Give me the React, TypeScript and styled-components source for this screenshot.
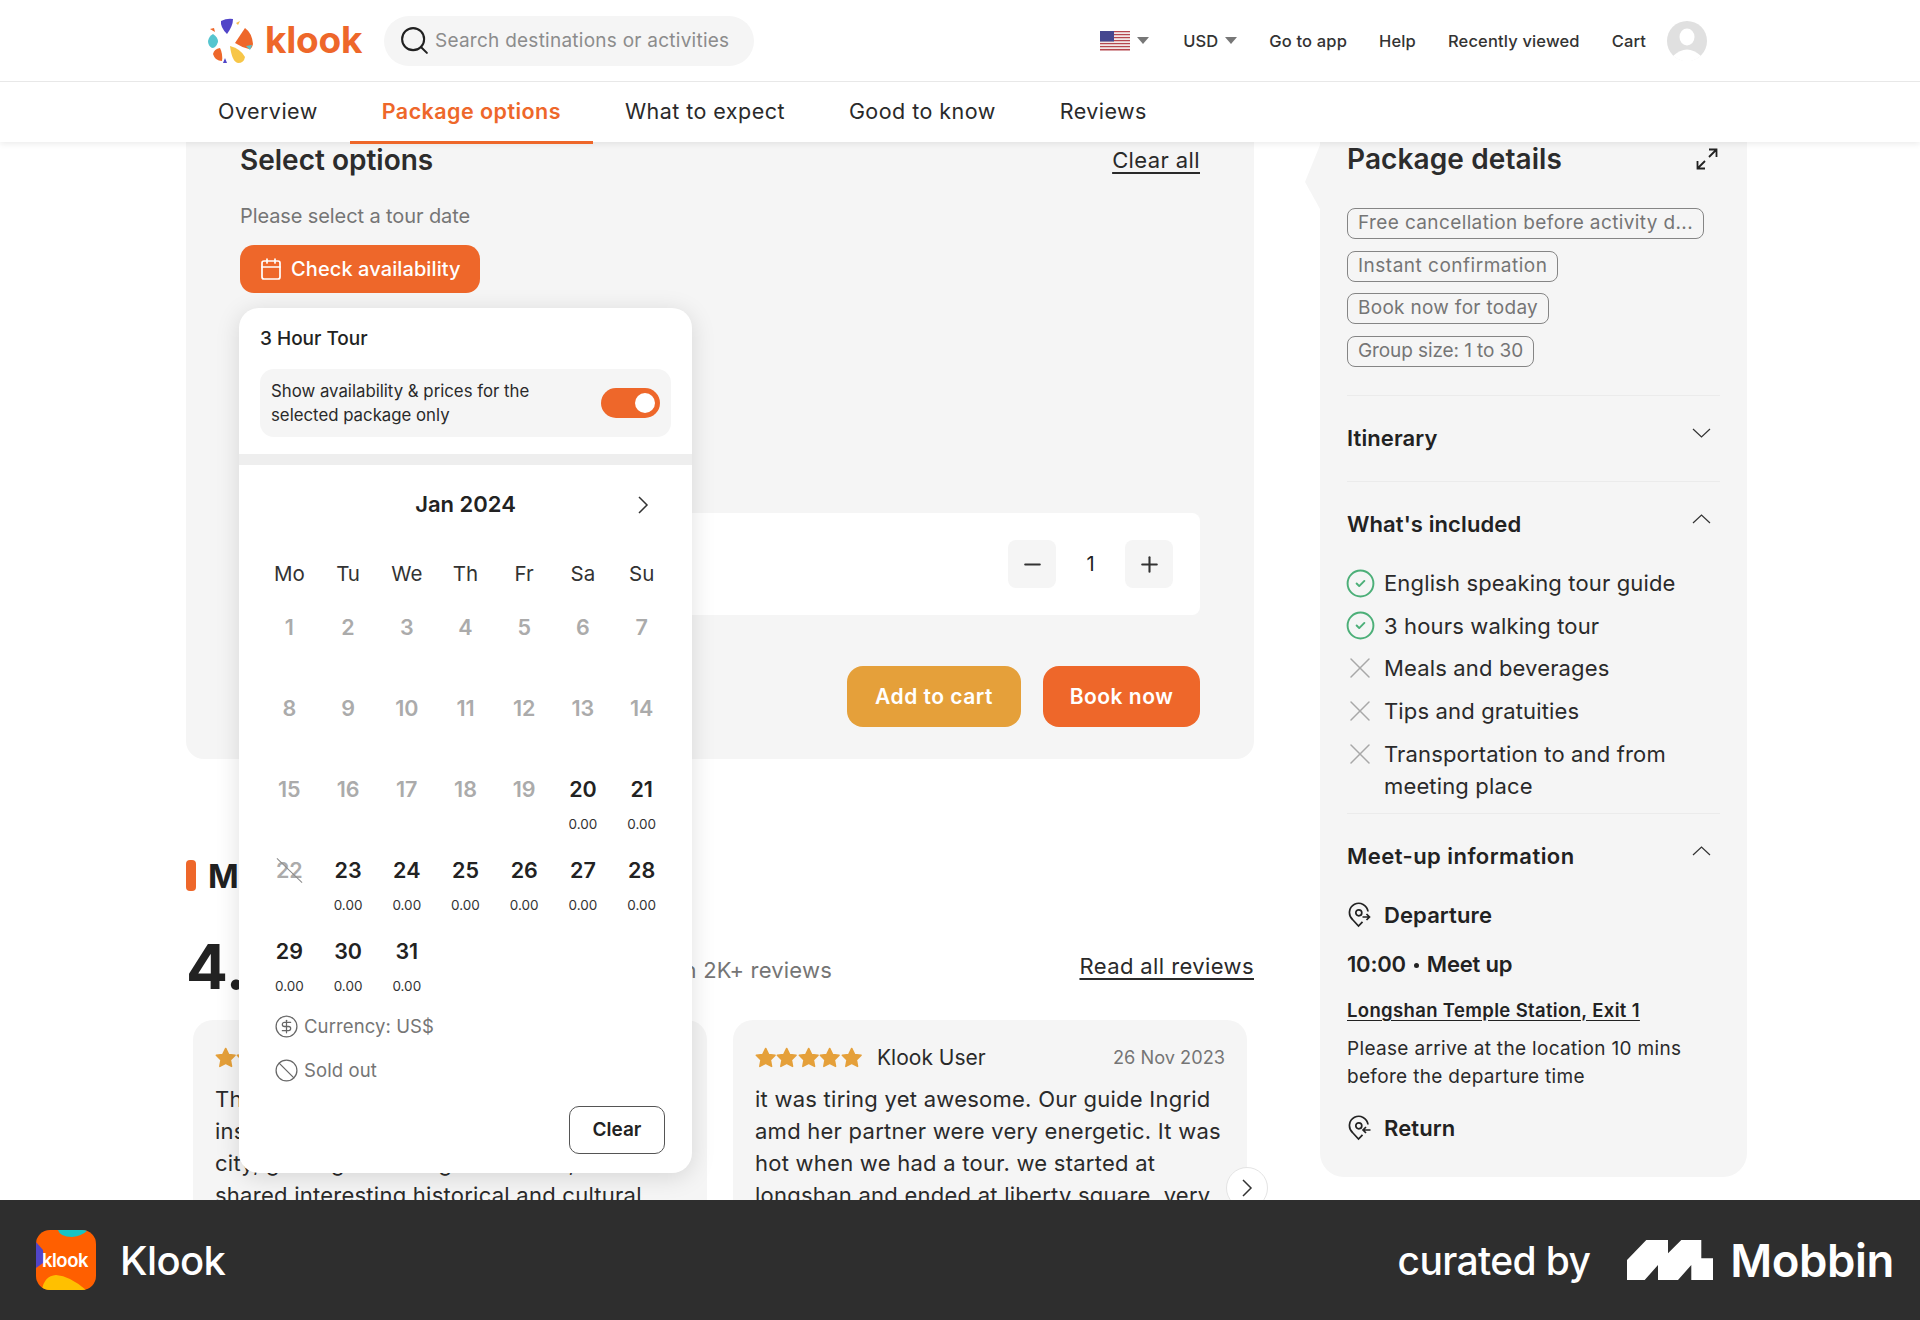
import React from 'react';
import styled, { createGlobalStyle } from 'styled-components';
import { Search, Calendar, CircleCheck, X, Minus, Plus, CircleDollarSign, Ban } from 'lucide-react';

const orange = '#ee672a';
const amber = '#e5a03a';
const ink = '#212121';
const grey = '#757575';
const panel = '#f5f5f5';

const Global = createGlobalStyle`
  html, body { margin: 0; padding: 0; background: #fff; }
  body { font-family: Inter, "Noto Sans", "Liberation Sans", sans-serif; color: ${ink}; }
  * { box-sizing: border-box; }
`;

const Page = styled.div`
  width: 1920px; height: 1320px; display: flex; flex-direction: column; overflow: hidden;
`;

/* ---------- top bar ---------- */
const TopBar = styled.header`
  height: 82px; flex: none; display: flex; align-items: center; padding-left: 205px; padding-right: 213px;
  border-bottom: 1px solid #e8e8e8; background: #fff; position: relative; z-index: 3;
`;
const Brand = styled.div`display: flex; align-items: center; gap: 8px; width: 179px; flex: none;`;
const BrandName = styled.span`
  font-size: 37px; font-weight: 700; color: ${orange}; letter-spacing: -0.2px; line-height: 44px; margin-top: -2px;
`;
const SearchBox = styled.div`
  width: 370px; height: 50px; border-radius: 25px; background: ${panel}; display: flex; align-items: center;
  gap: 4px; padding-left: 14px; color: #8c8c8c; font-size: 19px; letter-spacing: 0.25px; flex: none;
  svg { color: ${ink}; }
`;
const TopLinks = styled.nav`
  margin-left: auto; display: flex; align-items: center; font-size: 16.5px; font-weight: 500; color: #333; letter-spacing: 0.15px;
`;
const TopLink = styled.span<{ $gap?: number }>`
  margin-left: ${p => p.$gap ?? 32}px; display: flex; align-items: center; gap: 7px; white-space: nowrap;
`;
const Caret = styled.i`
  width: 0; height: 0; border-left: 6px solid transparent; border-right: 6px solid transparent; border-top: 7px solid #777; display: block;
`;
const Avatar = styled.span`display: block; width: 40px; height: 40px; margin-left: 21px;`;

/* ---------- tabs ---------- */
const Tabs = styled.nav`
  height: 60px; flex: none; display: flex; padding-left: 186px; background: #fff; position: relative; z-index: 2;
  box-shadow: 0 2px 6px rgba(0, 0, 0, 0.08);
`;
const Tab = styled.span<{ $active?: boolean }>`
  padding: 0 32px 2px; display: flex; align-items: center; font-size: 21.5px; height: 62px; white-space: nowrap; letter-spacing: 0.45px;
  font-weight: ${p => (p.$active ? 600 : 400)};
  color: ${p => (p.$active ? orange : '#2a2a2a')};
  border-bottom: 3px solid ${p => (p.$active ? orange : 'transparent')};
`;

/* ---------- main ---------- */
const Main = styled.main`
  flex: 1; min-height: 0; overflow: hidden; display: flex; align-items: flex-start; gap: 66px; padding-left: 186px;
`;
const LeftColumn = styled.div`width: 1068px; flex: none; position: relative;`;
const OptionsCard = styled.section`
  background: ${panel}; border-radius: 0 0 18px 18px; padding: 0 54px 32px;
`;
const SpacedRow = styled.div`display: flex; justify-content: space-between; align-items: center;`;
const CardTitle = styled.h2`
  margin: 0; font-size: 28px; line-height: 36px; font-weight: 600; color: #2c2c2c;
`;
const UnderLink = styled.a`font-size: 22px; color: #2a2a2a; text-decoration: underline; text-underline-offset: 4px; letter-spacing: .4px;`;
const Hint = styled.p`margin: 25px 0 0; font-size: 20px; line-height: 26px; color: ${grey}; letter-spacing: -.1px;`;
const CheckButton = styled.button`
  margin-top: 16px; width: 240px; height: 48px; border: 0; border-radius: 14px; background: ${orange}; color: #fff;
  font: 500 20px Inter, sans-serif; display: flex; align-items: center; gap: 8px; padding: 0 0 0 19px; letter-spacing: .1px;
`;
const QuantityRow = styled.div`
  margin-top: 220px; height: 102px; background: #fff; border-radius: 8px; display: flex; align-items: center; justify-content: flex-end; padding-right: 27px;
`;
const StepButton = styled.span`
  width: 48px; height: 48px; border-radius: 8px; background: ${panel}; display: flex; align-items: center; justify-content: center; color: #333;
`;
const Quantity = styled.span`width: 69px; text-align: center; font-size: 20px;`;
const Actions = styled.div`margin-top: 51px; display: flex; justify-content: flex-end; gap: 22px;`;
const ActionButton = styled.button<{ $tone: string; $w: number }>`
  width: ${p => p.$w}px; height: 61px; border: 0; border-radius: 16px; background: ${p => p.$tone}; color: #fff;
  font: 600 21px Inter, sans-serif; letter-spacing: .5px;
`;

const SectionHead = styled.div`margin-top: 101px; height: 31px; display: flex; align-items: center; gap: 12px;`;
const SectionBar = styled.i`display: block; width: 10px; height: 31px; border-radius: 4px; background: ${orange};`;
const SectionTitle = styled.h2`margin: 0; font-size: 33px; font-weight: 700; color: ${ink};`;
const RatingRow = styled.div`margin-top: 40px; height: 70px; display: flex; align-items: center; justify-content: space-between;`;
const RatingLeft = styled.div`width: 646px; display: flex; align-items: center; justify-content: space-between;`;
const Score = styled.span`font-size: 62px; font-weight: 700; color: #222;`;
const ScoreNote = styled.span`font-size: 22px; color: ${grey}; margin-top: 8px; letter-spacing: .2px;`;
const ReviewRow = styled.div`margin-top: 19px; padding: 0 7px; display: flex; gap: 26px; position: relative;`;
const ReviewCard = styled.article`
  width: 514px; height: 300px; background: ${panel}; border-radius: 20px; padding: 22px;
`;
const ReviewTop = styled.div`height: 30px; display: flex; align-items: center;`;
const Stars = styled.span`display: flex; width: 107px; margin-right: 15px;`;
const Reviewer = styled.span`font-size: 21px; color: #2a2a2a;`;
const ReviewDate = styled.span`margin-left: auto; font-size: 18.2px; color: ${grey};`;
const ReviewBody = styled.p`margin: 11px 0 0; font-size: 22px; line-height: 32px; color: #2a2a2a; white-space: nowrap; letter-spacing: .25px;`;
const RoundNext = styled.span`
  position: absolute; right: -14px; top: 147px; width: 42px; height: 42px; border-radius: 50%; background: #fff; border: 1px solid #e4e4e4;
  display: flex; align-items: center; justify-content: center;
`;

/* ---------- calendar popup ---------- */
const Popup = styled.div`
  position: absolute; left: 53px; top: 166px; width: 453px; height: 865px; background: #fff; border-radius: 20px; z-index: 1;
  box-shadow: 0 4px 24px rgba(0, 0, 0, 0.13); padding-top: 18px; display: flex; flex-direction: column;
`;
const PopupTitle = styled.div`padding: 0 21px; font-size: 19px; line-height: 26px; font-weight: 500; color: #222;`;
const ToggleBox = styled.div`
  margin: 17px 21px 0; height: 68px; border-radius: 14px; background: ${panel}; display: flex; align-items: center; justify-content: space-between; padding: 0 11px;
`;
const ToggleText = styled.span`font-size: 16.8px; line-height: 24px; color: #2a2a2a; white-space: nowrap;`;
const Switch = styled.span`
  width: 59px; height: 30px; border-radius: 15px; background: ${orange}; position: relative; display: block;
  &::after { content: ''; position: absolute; right: 5px; top: 5px; width: 20px; height: 20px; border-radius: 50%; background: #fff; }
`;
const PopupRule = styled.div`margin-top: 17px; height: 11px; background: #eeeeee; flex: none;`;
const MonthRow = styled.div`
  margin: 24px 21px 0; height: 30px; display: flex; align-items: center; justify-content: center; position: relative;
  font-size: 22px; font-weight: 600; color: #222;
`;
const MonthNext = styled.span`position: absolute; right: 22px; top: 6px; display: flex;`;
const WeekRow = styled.div`
  margin: 43px 21px 0; display: grid; grid-template-columns: repeat(7, 1fr); font-size: 20.5px; line-height: 24px; text-align: center; color: #333;
`;
const DayGrid = styled.div`
  margin: 23px 21px 0; display: grid; grid-template-columns: repeat(7, 1fr); grid-auto-rows: 81px; text-align: center;
`;
const DayCell = styled.div``;
const DayNum = styled.div<{ $on?: boolean }>`
  font-size: 21.5px; line-height: 36px; font-weight: 600; color: ${p => (p.$on ? '#222' : '#ababab')};
`;
const Struck = styled.span`
  position: relative; display: inline-block;
  &::after { content: ''; position: absolute; left: -4px; top: 18px; width: 35px; height: 1px; background: #8a8a8a; transform: rotate(44deg); }
`;
const Price = styled.div`font-size: 13.5px; line-height: 34px; color: #333;`;
const Legend = styled.div`
  margin: 0 21px 20px 35px; height: 24px; display: flex; align-items: center; gap: 5px; font-size: 18.5px; color: ${grey}; letter-spacing: .1px;
  svg { flex: none; }
`;
const ClearButton = styled.button`
  align-self: flex-end; margin: 4px 27px 0 0; width: 96px; height: 48px; background: #fff; border: 1.5px solid #555; border-radius: 10px; padding-bottom: 2px;
  font: 600 19px Inter, sans-serif; color: #222;
`;

/* ---------- package panel ---------- */
const DetailsCard = styled.aside`
  width: 427px; flex: none; background: ${panel}; border-radius: 0 0 24px 24px; padding: 0 27px 34px; position: relative;
  &::before { content: ''; position: absolute; left: -15px; top: 3px; width: 15px; height: 64px; background: ${panel};
    clip-path: polygon(100% 0, 0 58%, 100% 100%); }
`;
const DetailsHead = styled.div`height: 34px; display: flex; align-items: center; justify-content: space-between; padding-right: 2px;`;
const DetailsTitle = styled.h2`margin: 0; font-size: 28px; font-weight: 600; color: #2c2c2c; letter-spacing: .1px;`;
const TagList = styled.div`margin-top: 32px; display: flex; flex-direction: column; align-items: flex-start; gap: 11.7px;`;
const Tag = styled.span<{ $track: number }>`
  height: 31px; border: 1.5px solid #858585; border-radius: 8px; padding: 0 10px 2px; display: flex; align-items: center;
  font-size: 19px; color: ${grey}; white-space: nowrap; letter-spacing: ${p => p.$track}px;
`;
const Rule = styled.div<{ $top: number }>`height: 1px; background: #ebebeb; margin-top: ${p => p.$top}px;`;
const AccordionHead = styled.div<{ $top: number; $track?: number }>`
  margin-top: ${p => p.$top}px; height: 30px; display: flex; align-items: center; justify-content: space-between; padding: 0 9px 2px 0;
  font-size: 22px; font-weight: 600; color: #222; letter-spacing: ${p => p.$track ?? 0.1}px;
  svg { margin-top: -10px; }
`;
const Included = styled.ul`margin: 27px 0 0; padding: 0; list-style: none; display: flex; flex-direction: column; gap: 10.7px;`;
const IncludedItem = styled.li`display: flex; gap: 11px; font-size: 22px; line-height: 32px; color: #2a2a2a; letter-spacing: .15px;`;
const ItemIcon = styled.span`flex: none; width: 26px; height: 32px; display: flex; align-items: center; justify-content: center; svg { flex: none; }`;
const MeetLabel = styled.div<{ $top: number }>`
  margin-top: ${p => p.$top}px; height: 30px; display: flex; align-items: center; gap: 11px; font-size: 22px; font-weight: 600; color: #222; letter-spacing: .1px;
`;
const MeetTime = styled.div`
  margin-top: 19px; height: 30px; display: flex; align-items: center; gap: 8px; font-size: 22px; font-weight: 600; color: #222; letter-spacing: -.2px;
`;
const Bullet = styled.i`display: block; width: 5px; height: 5px; border-radius: 50%; background: #222; margin-top: 3px;`;
const Place = styled.a`
  display: block; margin-top: 18px; font-size: 18.5px; line-height: 26px; font-weight: 600; color: #222; text-decoration: underline; text-underline-offset: 3px; white-space: nowrap; letter-spacing: .35px;
`;
const MeetNote = styled.p`margin: 12px 0 0; font-size: 19px; line-height: 28px; color: #2a2a2a; white-space: nowrap; letter-spacing: .33px;`;

/* ---------- footer ---------- */
const Footer = styled.footer`
  height: 120px; flex: none; background: #2e2e2e; color: #fff; display: flex; align-items: center; padding: 0 26px 0 36px; position: relative; z-index: 3;
`;
const AppName = styled.span`margin-left: 24px; font-size: 40px; font-weight: 500; letter-spacing: -0.6px;`;
const Curated = styled.span`margin-left: auto; font-size: 39px; font-weight: 500; letter-spacing: -0.65px;`;
const MobbinMark = styled.span`display: flex; margin-left: 37px;`;
const MobbinName = styled.span`margin-left: 17px; font-size: 45.5px; font-weight: 600; letter-spacing: -0.4px;`;

/* ---------- drawings ---------- */
const KlookMark = () => (
  <svg width="52" height="50" viewBox="0 0 52 50">
    <path d="M16 5Q22 2 28 3Q28 10 22 18Q15 11 16 5Z" fill="#5145c8" />
    <path d="M31 7L35 5L33 9Z" fill="#f7c04a" />
    <path d="M30 27L40 12Q47 17 48 28Q47 33 44 33Q36 31 30 27Z" fill={orange} />
    <path d="M41 30L47 29L45 34Z" fill="#56c5cf" />
    <path d="M25 30Q36 33 40 41Q39 47 33 47Q27 46 25 30Z" fill="#f7c648" />
    <path d="M20 42L22 47L18 47Z" fill="#5145c8" />
    <path d="M15 32Q18 38 17 45Q10 45 8 38Q9 33 15 32Z" fill={orange} />
    <path d="M8 18Q13 21 13 26Q11 32 7 32Q3 30 3 25Q4 20 8 18Z" fill="#56c5cf" />
    <path d="M5 13L9 12L10 16Z" fill={orange} />
  </svg>
);

const UsFlag = () => (
  <svg width="30" height="20" viewBox="0 0 30 20">
    {Array.from({ length: 7 }, (_, i) => (
      <rect key={i} y={i * 3} width="30" height="1.5" fill="#b5474f" />
    ))}
    {Array.from({ length: 6 }, (_, i) => (
      <rect key={i} y={i * 3 + 1.5} width="30" height="1.5" fill="#f1e6e6" />
    ))}
    <rect width="14" height="10.5" fill="#45478f" />
  </svg>
);

const AvatarDrawing = () => (
  <svg width="40" height="40" viewBox="0 0 40 40">
    <circle cx="20" cy="20" r="20" fill="#e0e0e0" />
    <ellipse cx="20" cy="16" rx="7.5" ry="8.5" fill="#fff" />
    <path d="M6 35Q20 22 34 35Q20 46 6 35Z" fill="#fff" />
  </svg>
);

const Chevron = ({ dir }: { dir: 'up' | 'down' | 'right' }) => {
  if (dir === 'right') {
    return (
      <svg width="12" height="20" viewBox="0 0 12 20" fill="none" stroke="#333" strokeWidth="1.5">
        <path d="M2 2l8 8-8 8" />
      </svg>
    );
  }
  return (
    <svg width="19" height="10" viewBox="0 0 19 10" fill="none" stroke="#333" strokeWidth="1.2">
      <path d={dir === 'down' ? 'M1 1l8.500 8 8.500-8' : 'M1 9l8.500-8 8.500 8'} />
    </svg>
  );
};

const ExpandIcon = () => (
  <svg width="22" height="22" viewBox="0 0 22 22" fill="none" stroke="#222" strokeWidth="1.8">
    <path d="M13 1.5h7.500V9M20.500 1.500L13 9M1.500 13v7.500H9M1.500 20.500L9 13" />
  </svg>
);

const PinIcon = ({ back }: { back?: boolean }) => (
  <svg width="26" height="26" viewBox="0 0 26 26" fill="none" stroke="#222" strokeWidth="1.7">
    <path d="M21 9.500A9.300 9.300 0 1 0 5.500 17.500L11.500 24l4-4.200" />
    <circle cx="11.800" cy="10.800" r="3" />
    <path d={back ? 'M23.500 15h-7M19 12l-3 3 3 3' : 'M15.500 15h7M19.500 12l3 3-3 3'} />
  </svg>
);

const StarIcon = () => (
  <svg width="21.4" height="21" viewBox="0 0 20 19" style={{ flex: 'none' }}>
    <path
      d="M10 1l2.700 5.600 6.100.8-4.400 4.300 1.100 6.100L10 14.900l-5.500 2.900 1.100-6.100L1.200 7.400l6.100-.8z"
      fill={amber}
      stroke={amber}
      strokeWidth="1.4"
      strokeLinejoin="round"
    />
  </svg>
);

const FiveStars = () => (
  <Stars>
    {[0, 1, 2, 3, 4].map(i => (
      <StarIcon key={i} />
    ))}
  </Stars>
);

const AppIconBox = styled.span`
  width: 60px; height: 60px; border-radius: 14px; overflow: hidden; display: block; position: relative; flex: none;
`;
const AppIconArt = styled.svg`display: block;`;
const AppIconText = styled.span`
  position: absolute; left: 6px; top: 19px; font-size: 18.5px; line-height: 22px; font-weight: 600; letter-spacing: -0.5px; color: #fff;
`;
const AppIcon = () => (
  <AppIconBox>
    <AppIconArt width="60" height="60" viewBox="0 0 60 60">
      <rect width="60" height="60" fill="#ff5f00" />
      <path d="M22 0H52Q46 6 36 7Q24 7 22 0Z" fill="#16c4c4" />
      <path d="M0 12L7 20Q8 26 7 33L0 38Z" fill="#5145c8" />
      <path d="M6 60Q8 46 20 45Q34 46 50 60Z" fill="#ffc000" />
    </AppIconArt>
    <AppIconText>klook</AppIconText>
  </AppIconBox>
);

const MobbinDrawing = () => (
  <svg width="86" height="40" viewBox="0 0 86 40">
    <path d="M0 20L19.300 0H41V13.300L54.300 0H74.300V18.300H86V40H64.300V25L51 40H31V25L17.700 40H0Z" fill="#fff" />
  </svg>
);

const weekdays = ['Mo', 'Tu', 'We', 'Th', 'Fr', 'Sa', 'Su'];
const days = Array.from({ length: 31 }, (_, i) => i + 1);

export default function App() {
  return (
    <Page>
      <Global />
      <TopBar>
        <Brand>
          <KlookMark />
          <BrandName>klook</BrandName>
        </Brand>
        <SearchBox>
          <Search size={33} strokeWidth={1.5} />
          Search destinations or activities
        </SearchBox>
        <TopLinks>
          <TopLink>
            <UsFlag />
            <Caret />
          </TopLink>
          <TopLink $gap={34}>
            USD
            <Caret />
          </TopLink>
          <TopLink>Go to app</TopLink>
          <TopLink>Help</TopLink>
          <TopLink>Recently viewed</TopLink>
          <TopLink>Cart</TopLink>
          <Avatar>
            <AvatarDrawing />
          </Avatar>
        </TopLinks>
      </TopBar>

      <Tabs>
        <Tab>Overview</Tab>
        <Tab $active>Package options</Tab>
        <Tab>What to expect</Tab>
        <Tab>Good to know</Tab>
        <Tab>Reviews</Tab>
      </Tabs>

      <Main>
        <LeftColumn>
          <OptionsCard>
            <SpacedRow>
              <CardTitle>Select options</CardTitle>
              <UnderLink>Clear all</UnderLink>
            </SpacedRow>
            <Hint>Please select a tour date</Hint>
            <CheckButton>
              <Calendar size={24} strokeWidth={1.7} />
              Check availability
            </CheckButton>
            <QuantityRow>
              <StepButton>
                <Minus size={25} strokeWidth={2} />
              </StepButton>
              <Quantity>1</Quantity>
              <StepButton>
                <Plus size={25} strokeWidth={2} />
              </StepButton>
            </QuantityRow>
            <Actions>
              <ActionButton $tone={amber} $w={174}>Add to cart</ActionButton>
              <ActionButton $tone={orange} $w={157}>Book now</ActionButton>
            </Actions>
          </OptionsCard>

          <SectionHead>
            <SectionBar />
            <SectionTitle>Most recent</SectionTitle>
          </SectionHead>
          <RatingRow>
            <RatingLeft>
              <Score>4.8</Score>
              <ScoreNote>based on 2K+ reviews</ScoreNote>
            </RatingLeft>
            <UnderLink>Read all reviews</UnderLink>
          </RatingRow>
          <ReviewRow>
            <ReviewCard>
              <ReviewTop>
                <FiveStars />
                <Reviewer>Klook User</Reviewer>
                <ReviewDate>26 Nov 2023</ReviewDate>
              </ReviewTop>
              <ReviewBody>
                The tour was great and our guide was
                <br />
                insightful. She led us around the old
                <br />
                city, guiding us through the lanes, and
                <br />
                shared interesting historical and cultural
              </ReviewBody>
            </ReviewCard>
            <ReviewCard>
              <ReviewTop>
                <FiveStars />
                <Reviewer>Klook User</Reviewer>
                <ReviewDate>26 Nov 2023</ReviewDate>
              </ReviewTop>
              <ReviewBody>
                it was tiring yet awesome. Our guide Ingrid
                <br />
                amd her partner were very energetic. It was
                <br />
                hot when we had a tour. we started at
                <br />
                longshan and ended at liberty square, very
              </ReviewBody>
            </ReviewCard>
            <RoundNext>
              <Chevron dir="right" />
            </RoundNext>
          </ReviewRow>

          <Popup>
            <PopupTitle>3 Hour Tour</PopupTitle>
            <ToggleBox>
              <ToggleText>
                Show availability &amp; prices for the
                <br />
                selected package only
              </ToggleText>
              <Switch />
            </ToggleBox>
            <PopupRule />
            <MonthRow>
              Jan 2024
              <MonthNext>
                <Chevron dir="right" />
              </MonthNext>
            </MonthRow>
            <WeekRow>
              {weekdays.map(d => (
                <span key={d}>{d}</span>
              ))}
            </WeekRow>
            <DayGrid>
              {days.map(d => {
                const open = d >= 20;
                return (
                  <DayCell key={d}>
                    <DayNum $on={open && d !== 22}>{d === 22 ? <Struck>22</Struck> : d}</DayNum>
                    {open && d !== 22 && <Price>0.00</Price>}
                  </DayCell>
                );
              })}
            </DayGrid>
            <Legend>
              <CircleDollarSign size={25} strokeWidth={1.2} color="#666" />
              Currency: US$
            </Legend>
            <Legend>
              <Ban size={25} strokeWidth={1.2} color="#666" />
              Sold out
            </Legend>
            <ClearButton>Clear</ClearButton>
          </Popup>
        </LeftColumn>

        <DetailsCard>
          <DetailsHead>
            <DetailsTitle>Package details</DetailsTitle>
            <ExpandIcon />
          </DetailsHead>
          <TagList>
            <Tag $track={0.38}>Free cancellation before activity d...</Tag>
            <Tag $track={0.5}>Instant confirmation</Tag>
            <Tag $track={0.3}>Book now for today</Tag>
            <Tag $track={-0.1}>Group size: 1 to 30</Tag>
          </TagList>
          <Rule $top={28} />
          <AccordionHead $top={28}>
            Itinerary
            <Chevron dir="down" />
          </AccordionHead>
          <Rule $top={27} />
          <AccordionHead $top={28}>
            What's included
            <Chevron dir="up" />
          </AccordionHead>
          <Included>
            <IncludedItem>
              <ItemIcon><CircleCheck size={31} strokeWidth={1.5} color="#4caf78" /></ItemIcon>
              English speaking tour guide
            </IncludedItem>
            <IncludedItem>
              <ItemIcon><CircleCheck size={31} strokeWidth={1.5} color="#4caf78" /></ItemIcon>
              3 hours walking tour
            </IncludedItem>
            <IncludedItem>
              <ItemIcon><X size={36} strokeWidth={1} color="#a8a8a8" /></ItemIcon>
              Meals and beverages
            </IncludedItem>
            <IncludedItem>
              <ItemIcon><X size={36} strokeWidth={1} color="#a8a8a8" /></ItemIcon>
              Tips and gratuities
            </IncludedItem>
            <IncludedItem>
              <ItemIcon><X size={36} strokeWidth={1} color="#a8a8a8" /></ItemIcon>
              <span>Transportation to and from<br />meeting place</span>
            </IncludedItem>
          </Included>
          <Rule $top={11} />
          <AccordionHead $top={28} $track={0.45}>
            Meet-up information
            <Chevron dir="up" />
          </AccordionHead>
          <MeetLabel $top={28}>
            <PinIcon />
            Departure
          </MeetLabel>
          <MeetTime>
            10:00
            <Bullet />
            Meet up
          </MeetTime>
          <Place>Longshan Temple Station, Exit 1</Place>
          <MeetNote>
            Please arrive at the location 10 mins
            <br />
            before the departure time
          </MeetNote>
          <MeetLabel $top={22}>
            <PinIcon back />
            Return
          </MeetLabel>
        </DetailsCard>
      </Main>

      <Footer>
        <AppIcon />
        <AppName>Klook</AppName>
        <Curated>curated by</Curated>
        <MobbinMark>
          <MobbinDrawing />
        </MobbinMark>
        <MobbinName>Mobbin</MobbinName>
      </Footer>
    </Page>
  );
}
